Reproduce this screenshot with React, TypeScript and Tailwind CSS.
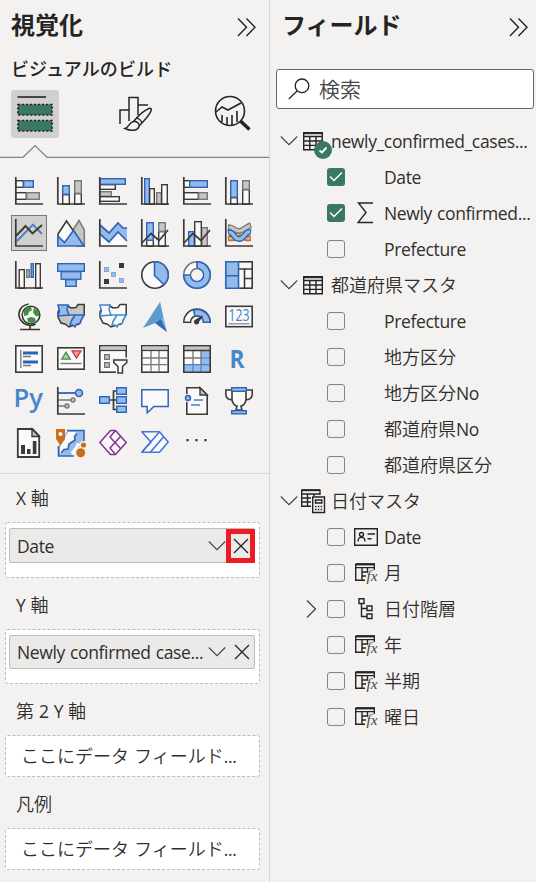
import React from "react";

const D = "#3b3a38";
const BL = "#2f63b8";
const LB = "#94bbe9";
const G = "#797775";
const LG = "#c8c6c4";
const W = "#fafafa";

const kinds: Record<string, [string, string]> = {
  b: [LB, BL],
  w: [W, D],
  g: [LG, G],
  d: [D, D],
};

/* Rectangle given by its outer edges, with the stroke kept inside. */
function B({ p, k }: { p: [number, number, number, number]; k: string }) {
  const [x1, y1, x2, y2] = p;
  return (
    <rect x={x1 + 0.7} y={y1 + 0.7} width={x2 - x1 - 1.4} height={y2 - y1 - 1.4} fill={kinds[k][0]} stroke={kinds[k][1]} strokeWidth={1.4} />
  );
}

const Axis = () => <path d="M.8 0V27H28" fill="none" stroke={D} strokeWidth={1.7} />;

type Bar = [string, number, number, number, number];
function Bars({ items, axis = true }: { items: Bar[]; axis?: boolean }) {
  return (
    <>
      {items.map(([k, a, b, c, d], i) => (
        <B key={i} k={k} p={[a, b, c, d]} />
      ))}
      {axis && <Axis />}
    </>
  );
}

const MapShape = ({ white }: { white?: boolean }) => {
  const s = white ? "#3f86d2" : BL;
  return (
    <>
      <path d="M10 2.500L14 5L19 4.500L21 1.500H27.200V11L22 21L16 22.500L12 24L8 21L4 20L1 14V9L3 5z" fill={white ? W : LG} stroke={D} strokeWidth="1.500" />
      <path d="M1 2H11L10 6.500L12 12L1 13L2.500 8z" fill={white ? W : LB} stroke={s} strokeWidth="1.500" />
      <path d="M14 18.500L18 12H27.200L24 17L23.500 20L19 21.500L18 24L16 22L13 22z" fill={white ? W : LB} stroke={s} strokeWidth="1.500" />
      <path d="M12 12H18" stroke={s} strokeWidth="1.400" />
    </>
  );
};

const icons: React.ReactNode[] = [
  <Bars items={[["w", 0, 3, 9, 11], ["b", 8, 3, 19, 11], ["w", 0, 15, 12, 23], ["g", 11, 15, 25, 23]]} />,
  <Bars items={[["w", 5, 17, 13, 28], ["b", 5, 8, 13, 18], ["w", 17, 16, 25, 28], ["g", 17, 3, 25, 17]]} />,
  <Bars items={[["w", 0, 7, 17, 13], ["b", 0, 1, 27, 8], ["g", 0, 14, 13, 20], ["w", 0, 19, 21, 25]]} />,
  <Bars items={[["b", 3, 1, 9, 28], ["w", 8, 11, 14, 28], ["g", 15, 15, 21, 28], ["w", 20, 7, 27, 28]]} />,
  <Bars items={[["w", 0, 3, 8, 11], ["b", 6, 3, 25, 11], ["w", 0, 15, 16, 23], ["g", 15, 15, 25, 23]]} />,
  <Bars items={[["w", 5, 20, 13, 28], ["b", 5, 3, 13, 21], ["w", 17, 12, 25, 28], ["g", 17, 3, 25, 13]]} />,
  <>
    <g fill="none" strokeWidth="1.900">
      <path d="M2 22L18 5.500L27 15" stroke="#4682c4" />
      <path d="M1 17L10.500 7L17.500 14.500L27 6" stroke={D} />
    </g>
    <Axis />
  </>,
  <>
    <path d="M14 14L22 1.500L27.300 11V27H20z" fill={LG} stroke={G} strokeWidth="1.500" />
    <path d="M1 26V15L9.500 2L18 14 14 24z" fill={W} stroke={D} strokeWidth="1.600" />
    <path d="M.8 27V17L7.500 23.500L16.500 11.500L27 27z" fill={LB} stroke={BL} strokeWidth="1.600" />
  </>,
  <>
    <path d="M1 15L10 23L19 13L28 22V27H1z" fill={W} />
    <path d="M1 6L10 14L19 4L24 9H28V22L19 13L10 23L1 15z" fill={LB} />
    <path d="M1 6L10 14L19 4L24 9H28M1 15L10 23L19 13L28 22" fill="none" stroke={BL} strokeWidth="1.700" />
    <Axis />
  </>,
  <>
    <Bars items={[["w", 5, 20, 13, 28], ["b", 5, 3, 13, 22], ["w", 17, 12, 25, 28], ["g", 17, 3, 25, 13]]} />
    <path d="M1 24L10 14.500L18 21.500L27 11" fill="none" stroke={D} strokeWidth="1.700" />
  </>,
  <>
    <Bars items={[["b", 5, 12, 12, 28], ["g", 18, 8, 25, 28], ["w", 11, 2, 19, 28]]} />
    <path d="M1 24L10 14.500L18 21.500L27 11" fill="none" stroke={D} strokeWidth="1.700" />
  </>,
  <>
    <g fill="none">
      <path d="M3 19.500H8C12 19 12 14 15 14S18 19 21 19.500H26" stroke="#cb6d1b" strokeWidth="5.500" />
      <path d="M4 19.500H8C12 19 12 14 15 14S18 19 21 19.500H25" stroke="#f7c070" strokeWidth="2.200" />
      <path d="M3 8C8 8 9 12 14 12S20 8 26 6" stroke={G} strokeWidth="6" />
      <path d="M4 8C8 8 9 12 14 12S20 8 25 6.400" stroke={LG} strokeWidth="3.200" />
      <path d="M3 13.500C9 12 8 20 14 20S20 12 26 13" stroke={BL} strokeWidth="6" />
      <path d="M4 13.500C9 12 8 20 14 20S20 12 25 13" stroke={LB} strokeWidth="3.200" />
    </g>
    <Axis />
  </>,
  <Bars items={[["w", 3.5, 8, 10, 28], ["g", 11, 8, 15, 17], ["w", 20, 2, 26, 28], ["b", 15.5, 2, 19, 17]]} />,
  <Bars axis={false} items={[["b", 0, 2, 28, 11], ["b", 3.5, 10, 24.5, 19], ["b", 8, 18, 20, 26]]} />,
  <>
    <g fill={LB} stroke="#76a3d8" strokeWidth=".8">
      <rect x="5.400" y="6.400" width="4.200" height="4.200" />
      <rect x="12.400" y="11.400" width="4.200" height="4.200" />
      <rect x="20.400" y="17.400" width="4.200" height="4.200" />
    </g>
    <path d="M20 2h5v5h-5zM5 18h5v5h-5z" fill={D} />
    <Axis />
  </>,
  <>
    <circle cx="14" cy="14" r="13.200" fill={W} stroke={D} strokeWidth="1.600" />
    <path d="M13.500 .8A13.200 13.200 0 0 1 22.900 23.700L13.500 14.500z" fill={LB} stroke={BL} strokeWidth="1.600" />
  </>,
  <>
    <circle cx="14" cy="14" r="13.200" fill={W} stroke={G} strokeWidth="1.600" />
    <path d="M14 .8A13.200 13.200 0 1 1 .8 14H7.500A6.500 6.500 0 1 0 14 7.500z" fill={LB} stroke={BL} strokeWidth="1.600" />
    <circle cx="14" cy="14" r="5.600" fill="#f3f2f1" />
    <path d="M7.500 14A6.500 6.500 0 0 1 14 7.500" fill="none" stroke={G} strokeWidth="1.600" />
  </>,
  <>
    <rect x=".8" y=".8" width="26.400" height="26.400" fill={W} stroke={D} strokeWidth="1.600" />
    <path d="M14 8H28M19.500 8V28M19.500 17.500H28" stroke={D} strokeWidth="1.600" />
    <path d="M.8 .8H13.500V27.200H.8zM.8 14.800H13.500" fill={LB} stroke={BL} strokeWidth="1.600" />
  </>,
  <>
    <circle cx="16" cy="12" r="8.800" fill={W} stroke={D} strokeWidth="1.600" />
    <path d="M9 7l4-3h3l1 3-3 2-1 3-4 1zM19 4.500l4 3 1.500 5-3.500 1-3-4zM12 15.500l4-1.500 4 1 1 3-4 2-4-1z" fill="#3f9142" />
    <path d="M13.500 1C3 3 1 14 8.500 20c4 3 9 3 12 1M15 23v3.500M5 26.500H25" fill="none" stroke={D} strokeWidth="1.700" />
  </>,
  <MapShape />,
  <MapShape white />,
  <>
    <path d="M19 -1L14 20L26 29z" fill="#78b5dd" />
    <path d="M19 -1L2 25L14 20L22 14z" fill="#5c9bca" />
    <path d="M20 16L26 29L14 20z" fill="#3868b8" />
  </>,
  <>
    <path d="M.8 19.200A13.200 13.200 0 0 1 27.200 19.200H20.500A6.500 6.500 0 0 0 7.500 19.200z" fill={W} stroke={D} strokeWidth="1.500" />
    <path d="M10.500 7A13.200 13.200 0 0 1 27.200 19.200H20.500A6.500 6.500 0 0 0 12 13z" fill={LB} stroke={BL} strokeWidth="1.500" />
    <path d="M19.500 13L15.500 18.500A2 2 0 1 1 13 17z" fill={D} stroke={D} strokeWidth="1.200" />
  </>,
  <>
    <rect x=".8" y="3.300" width="26.400" height="20.400" fill={W} stroke={D} strokeWidth="1.600" />
    <text x="3.500" y="18.300" textLength="21" lengthAdjust="spacingAndGlyphs" fontSize="15.500" fontFamily="Open Sans, sans-serif" fill="#3f82cc">123</text>
    <path d="M3.500 20.800H24.500" stroke={G} strokeWidth="1.100" />
  </>,
  <>
    <rect x=".8" y=".8" width="26.400" height="26.400" fill={W} stroke={D} strokeWidth="1.600" />
    <path d="M5.800 5V23M8 11.500H16M8 20.500H16" stroke={G} strokeWidth="1.300" />
    <path d="M8 8H23M8 17H23" stroke={BL} strokeWidth="2.800" />
  </>,
  <>
    <rect x=".8" y="2.800" width="26.400" height="21.400" fill={W} stroke={D} strokeWidth="1.600" />
    <path d="M4.700 14.200L9 7.300L13.300 14.200z" fill="#a5d5a7" stroke="#3f9142" strokeWidth="1.300" />
    <path d="M15 5.800L19.500 13L24 5.800z" fill="#f19a9c" stroke="#d13438" strokeWidth="1.300" />
    <path d="M3.500 18.500H24.500" stroke={G} strokeWidth="1.400" />
  </>,
  <>
    <rect x=".8" y=".8" width="26.400" height="26.400" fill={W} stroke={D} strokeWidth="1.600" />
    <path d="M1.500 1.500h25v4h-25z" fill={LG} />
    <path d="M1 5.500H27" stroke={D} strokeWidth="1.200" />
    <B k="g" p={[5, 9, 11, 15]} />
    <B k="g" p={[5, 17, 11, 23]} />
    <path d="M12.500 12.500H30V30H17V22L12.500 18z" fill="#f3f2f1" />
    <path d="M14.800 15H27.800V17.500L23.500 21.500V28H19V21.500L14.800 17.500z" fill={W} stroke={D} strokeWidth="1.500" />
  </>,
  <>
    <rect x=".8" y=".8" width="26.400" height="26.400" fill={W} stroke={D} strokeWidth="1.600" />
    <path d="M1.500 1.500h25v4h-25z" fill={LG} />
    <path d="M10 6V27M18 6V27M1 13H27M1 19.700H27" stroke={G} strokeWidth="1.300" />
    <path d="M1 5.500H27" stroke={D} strokeWidth="1.200" />
  </>,
  <>
    <rect x=".8" y=".8" width="26.400" height="26.400" fill={W} />
    <path d="M18 6h9v21H1v-7h17z" fill={LB} />
    <path d="M1.500 1.500h25v4h-25z" fill={LG} />
    <path d="M10 6V19M18 6V19M1 13H18" stroke={G} strokeWidth="1.300" />
    <path d="M18 13H27M1 19.700H27M10 20V27M18 20V27" stroke="#4d82c8" strokeWidth="1.200" />
    <path d="M1 5.500H27M.8.8H27.200V27.200H.8z" fill="none" stroke={D} strokeWidth="1.600" />
  </>,
  <text x="4.500" y="22.800" textLength="15" lengthAdjust="spacingAndGlyphs" fontSize="25" fontWeight="700" fontFamily="Open Sans, sans-serif" fill="#4687c8">R</text>,
  <text x="-1.500" y="20.300" textLength="29.500" lengthAdjust="spacingAndGlyphs" fontSize="26" fontWeight="600" fontFamily="Open Sans, sans-serif" fill="#4687c8">Py</text>,
  <>
    <path d="M1 6H19" stroke={BL} strokeWidth="1.800" />
    <path d="M1 13H14M1 19H8" stroke={G} strokeWidth="1.600" />
    <circle cx="22" cy="6" r="3.500" fill={LB} stroke={BL} strokeWidth="1.500" />
    <circle cx="16" cy="13" r="2" fill={LG} stroke={G} strokeWidth="1.400" />
    <circle cx="10" cy="19" r="2" fill={LG} stroke={G} strokeWidth="1.400" />
    <Axis />
  </>,
  <>
    <path d="M11 13H17M18 4H14.500V22.500H18" fill="none" stroke={D} strokeWidth="1.700" />
    <Bars axis={false} items={[["b", 0, 9, 11, 17], ["b", 17, 0, 28, 8], ["b", 17, 9, 28, 17], ["b", 17, 18.5, 28, 26]]} />
  </>,
  <path d="M.8 2.800H27.200V19.500H13L6.200 25.800V19.500H.8z" fill={W} stroke={BL} strokeWidth="1.500" />,
  <>
    <path d="M3.800 .8H17L24.200 8V27.200H3.800z" fill={W} stroke={D} strokeWidth="1.600" />
    <path d="M17 .8V8H24.200z" fill={LG} stroke={D} strokeWidth="1.400" />
    <path d="M2 7h5l2 4-2 4H2z" fill="#f3f2f1" />
    <circle cx="5" cy="11" r="2.500" fill={LB} stroke={BL} strokeWidth="1.400" />
    <path d="M11 13H20M8 18H17" stroke="#3f82cc" strokeWidth="1.500" />
  </>,
  <>
    <path d="M7 3H.8V7C.8 11 4 13 8 13M21 3H27.200V7C27.200 11 24 13 20 13" fill={W} stroke={D} strokeWidth="1.600" />
    <path d="M7 4H21V12C21 16 18 19 16 19L17 23H11L12 19C10 19 7 16 7 12z" fill={W} stroke={D} strokeWidth="1.600" />
    <Bars axis={false} items={[["b", 6, 0, 22, 5], ["b", 6, 23, 22, 27.5]]} />
  </>,
  <>
    <path d="M2.800 0H17.500L24.200 7V28H2.800z" fill={W} stroke={D} strokeWidth="1.800" />
    <path d="M17 0V7.500H24.200z" fill={LG} stroke={D} strokeWidth="1.400" />
    <path d="M6 16h4v9H6zM12 20h3.500v5H12zM17.800 12h3.600v13h-3.600z" fill={D} />
  </>,
  <>
    <path d="M10 2H26.500V11C23 14 25 17 20 21L14 26.500H1.500V17z" fill={LB} />
    <path d="M11 3H19L17 7L18 11L12 15L11 20L7 21L3 25V18z" fill={W} />
    <path d="M26 15L21 18L17 25L15 26L14 23L18 18L20 14z" fill={W} />
    <path d="M10 1.500H27V14M17 27H1.500V17M20 5L17.500 7.500L18 11L12 15L11 20L7 20.500L4 24" fill="none" stroke={BL} strokeWidth="1.600" />
    <path d="M-1 0H8V10L3.500 16.500L-1 10z" fill="#cb6d1b" />
    <circle cx="3.500" cy="5" r="2" fill="#fff" />
    <circle cx="23.700" cy="23.700" r="6" fill="#f3f2f1" />
    <circle cx="26.500" cy="16" r="4" fill="#f3f2f1" />
    <circle cx="23.700" cy="23.700" r="4.500" fill="#cb6d1b" />
    <circle cx="26.500" cy="16" r="2.600" fill="#cb6d1b" />
  </>,
  <g fill={W} stroke="#852f96" strokeWidth="1.500" strokeLinejoin="round">
    <path d="M11.500 1.500H16.500L27.200 13.500L16.500 25.500H11.500L.8 13.500z" />
    <path d="M16.500 1.500L11 8L21.500 19.500M16.500 25.500L11 19L21.500 7.500" fill="none" />
  </g>,
  <g fill={W} stroke="#4574d8" strokeWidth="1.600" strokeLinejoin="round">
    <path d="M.8 2.800H18.500L27.200 13L18.500 23.200H.8L10 13z" />
    <path d="M18.500 2.800L1.500 22.500M22.500 8L9.500 23" fill="none" />
  </g>,
  <path d="M3.500 10h2v2.200h-2zM12.500 10h2v2.200h-2zM21.500 10h2v2.200h-2z" fill="#252423" />,
];

const LATIN = "font-['Open_Sans',sans-serif]";
const CJK = "font-['Noto_Sans_CJK_JP',sans-serif]";

/* Splits a label into Latin and Japanese runs, each in its own face. */
function Label({ children }: { children: string }) {
  const runs = children.match(/[\x20-\x7e]+|[^\x20-\x7e]+/g) ?? [];
  const mixed = /[^\x20-\x7e]/.test(children);
  return (
    <span className={mixed ? "-mt-0.5 flex items-baseline whitespace-pre leading-6 text-[#302f2d]" : "flex items-baseline whitespace-pre leading-6 text-[#302f2d]"}>
      {runs.map((r, i) => (
        <span key={i} className={/[\x20-\x7e]/.test(r) ? `${LATIN} text-[17.5px] tracking-[-0.35px] [word-spacing:0.8px]` : `${CJK} text-[18px] font-[350]`}>
          {r}
        </span>
      ))}
    </span>
  );
}

const Expand = () => (
  <svg width="20" height="20" viewBox="0 0 20 20" fill="none" stroke="#252423" strokeWidth="1.400">
    <path d="M1 1.500L9.500 10.200L1 19M9.500 1.500L18 10.200L9.500 19" />
  </svg>
);
const Chevron = () => (
  <svg className="shrink-0" width="18" height="12" viewBox="0 0 18 12" fill="none" stroke="#484644" strokeWidth="1.200">
    <path d="M.8 1.500L9 9.700L17.200 1.500" />
  </svg>
);
const Cross = () => (
  <svg className="shrink-0" width="16" height="16" viewBox="0 0 16 16" fill="none" stroke="#252423" strokeWidth="1.300">
    <path d="M1 1L15 15M15 1L1 15" />
  </svg>
);

function Well({ label, value, marked }: { label: string; value: string; marked?: boolean }) {
  return (
    <div className={marked ? "h-[107px]" : "h-[106px]"}>
      <div className="flex h-12 items-center pl-4"><Label>{label}</Label></div>
      <div className="relative ml-[5px] h-[56px] w-[255px] pl-1 pr-[5px] pt-[6px]">
        <DashedBox h={marked ? 56 : 55} />
        <div className={marked ? "relative flex h-[35px] items-center rounded-[2px] border border-[#bebbb8] bg-[#ebeae9] pl-[7px]" : "relative flex h-[34px] items-center rounded-[2px] border border-[#bebbb8] bg-[#ebeae9] pl-[7px]"}>
          <div className="w-[191px] shrink-0"><Label>{value}</Label></div>
          <Chevron />
          <div className={marked ? "absolute -right-px top-0 flex h-[34px] w-[29px] items-center justify-center border-[5px] border-[#ed1c24] pl-px" : "absolute right-0 top-0 flex h-[32px] w-[27px] items-center justify-center pl-[2px]"}>
            <Cross />
          </div>
        </div>
      </div>
    </div>
  );
}

function DashedBox({ h }: { h: number }) {
  return (
    <svg className="absolute left-0 top-0" width="255" height={h}>
      <rect x=".5" y=".5" width="254" height={h - 1} rx="2" fill="#fff" stroke="#bebbb8" strokeDasharray="3 2" />
    </svg>
  );
}

function EmptyWell({ label }: { label: string }) {
  return (
    <div className="h-[93px]">
      <div className="flex h-12 items-center pl-4"><Label>{label}</Label></div>
      <div className="relative ml-[5px] flex h-[42px] w-[255px] items-center pl-4">
        <DashedBox h={42} />
        <span className="relative"><Label>ここにデータ フィールド...</Label></span>
      </div>
    </div>
  );
}

const TableIcon = () => (
  <svg width="20" height="19" viewBox="0 0 20 19" fill="none" stroke="#252423" strokeWidth="1.400">
    <path d="M.7 .7H19.300V17.800H.7zM.7 4.500H19.300M.7 9H19.300M.7 13.400H19.300M6.800 4.500V18M13 4.500V18" />
    <path d="M.7 1.200H19.300" strokeWidth="2" />
  </svg>
);
const CalcTableIcon = () => (
  <svg width="25" height="25" viewBox="0 0 25 25" fill="none" stroke="#252423" strokeWidth="1.400">
    <path d="M10 17.300H.7V1.300H19V6M.7 5H19M.7 9H10M.7 13H10M6.500 5V17M13 5V7" />
    <path d="M.7 1.200H19" strokeWidth="2" />
    <path d="M11.700 8H23.500V23.500H11.700z" fill="#f3f2f1" />
    <path d="M14.500 11H20.800V14H14.500z" />
    <path d="M14 17.500H21.500M14 20.500H21.500" strokeDasharray="1.500 1.300" />
  </svg>
);
const CardIcon = () => (
  <svg width="24" height="18" viewBox="0 0 24 18" fill="none" stroke="#252423" strokeWidth="1.400">
    <path d="M.7 .7H23.300V17.300H.7zM13.500 6H21M13.500 10.800H17.500" />
    <circle cx="7.500" cy="6.500" r="2" />
    <path d="M4 13.500C4 8 11 8 11 13.500" />
  </svg>
);
const FxIcon = () => (
  <svg width="24" height="22" viewBox="0 0 24 22" fill="none" stroke="#252423" strokeWidth="1.400">
    <path d="M1.700 2H20.300V8M1.700 2V18.300H11M1.700 5.600H20.300M8 5.600V18M13.500 5.600V10H8M8 14H12" />
    <path d="M1.700 2.400H20.300" strokeWidth="2" />
    <text x="12.500" y="18.800" textLength="11" lengthAdjust="spacingAndGlyphs" fontFamily="Liberation Serif, serif" fontStyle="italic" fontSize="15" fill="#484644" stroke="none">fx</text>
  </svg>
);
const TreeIcon = () => (
  <svg width="16" height="22" viewBox="0 0 16 22" fill="none" stroke="#252423" strokeWidth="1.400">
    <path d="M1 .8H6V5.500H1zM3.500 5.500V18.500H9M3.500 10.500H9M9 8H14V12.500H9zM9 16H14V20.500H9z" />
  </svg>
);
const SigmaIcon = () => (
  <svg width="17" height="22" viewBox="0 0 17 22" fill="none" stroke="#252423" strokeWidth="1.400">
    <path d="M16 1H1.500L9 10.500L1 20.500H16" />
  </svg>
);

function Check({ on }: { on?: boolean }) {
  return (
    <span className={on ? "flex size-[18px] shrink-0 items-center justify-center rounded-[3px] bg-[#397864]" : "size-[18px] shrink-0 rounded-[3px] border border-[#858381]"}>
      {on && (
        <svg width="14" height="12" viewBox="0 0 14 12" fill="none" stroke="#fff" strokeWidth="1.400"><path d="M1 5.500L5 9.500L13 1.500" /></svg>
      )}
    </span>
  );
}

function Field({ name, on, icon, nested }: { name: string; on?: boolean; icon?: React.ReactNode; nested?: boolean }) {
  return (
    <div className="flex h-9 items-center">
      <span className="flex w-[57px] justify-end pr-2.5">
        {nested && <svg width="11" height="20" viewBox="0 0 11 20" fill="none" stroke="#484644" strokeWidth="1.300"><path d="M1 1.500L9.500 10L1 18.500" /></svg>}
      </span>
      <Check on={on} />
      <span className="flex w-[39px] justify-center pr-[1px] pl-[3px]">{icon}</span>
      <Label>{name}</Label>
    </div>
  );
}

function TableRow({ name, checked, calc }: { name: string; checked?: boolean; calc?: boolean }) {
  return (
    <div className="flex h-9 items-center">
      <span className="ml-[10px]"><Chevron /></span>
      <span className={calc ? "relative ml-[3px] w-[30px]" : "relative ml-[5px] w-[28px]"}>
        {calc ? <CalcTableIcon /> : <TableIcon />}
        {checked && (
          <svg className="absolute left-[11px] top-[9px]" width="18" height="18" viewBox="0 0 18 18">
            <circle cx="9" cy="9" r="9" fill="#397864" />
            <path d="M5.500 9.500L8 11.500L12.500 6.500" fill="none" stroke="#fff" strokeWidth="1.900" />
          </svg>
        )}
      </span>
      <Label>{name}</Label>
    </div>
  );
}

export default function App() {
  return (
    <div className="flex h-[882px] w-[536px] overflow-hidden bg-[#f3f2f1] text-[#252423]">
      <section className="flex w-[270px] shrink-0 flex-col border-r border-[#d9d7d5]">
        <header className="flex h-[54px] items-center justify-between pl-[11px] pr-3">
          <h1 className={`${CJK} -mt-1.5 text-[24px] font-bold leading-none`}>視覚化</h1>
          <Expand />
        </header>
        <h2 className={`${CJK} h-9 pl-[11px] text-[18px] font-medium leading-[29px] tracking-[0.12px]`}>ビジュアルのビルド</h2>
        <div className="flex h-12 items-center pl-[11px]">
          <div className="flex size-12 items-center justify-center rounded-[3px] bg-[#d2d0ce]">
            <svg width="38" height="38" viewBox="0 0 38 38">
              <path d="M1.500 2H30" stroke="#252423" strokeWidth="1.600" />
              <path d="M2 9.500H36V20H2zM2 25.500H36V36H2z" fill="#397864" stroke="#252423" strokeWidth="1.700" strokeDasharray="2.300 1.700" />
            </svg>
          </div>
          <svg className="ml-[59px]" width="35" height="36" viewBox="0 0 35 36" fill="none" stroke="#252423" strokeWidth="1.500">
            <path d="M2 28V14H11M11 25V1.500H20V19M20 9H30" />
            <path d="M16 25C20 20 26 14.500 31 12.500C33 12 34 13 33 15C31 20 26 25 21 30z" fill="#f3f2f1" />
            <path d="M18.500 22C21 22.500 23.500 25 24 27" />
            <path d="M7 32.500C11 31.500 11 26 15.500 25.500C19 25 22 27.500 21 30.500C19.500 35.500 12 35 7 32.500z" fill="#f3f2f1" />
          </svg>
          <svg className="ml-[60px]" width="38" height="38" viewBox="0 0 38 38" fill="none" stroke="#252423" strokeWidth="1.600">
            <circle cx="17" cy="16" r="14.500" />
            <path d="M3 17L9 12L15 15L28 8M9 27V20M14 30V22M19 30V20M24 27V16" />
            <path d="M27.500 26L36.500 34.500" strokeWidth="3.500" />
          </svg>
        </div>
        <svg className="mt-1.5 shrink-0" width="269" height="15" viewBox="0 0 269 15" fill="none" stroke="#858381" strokeWidth="1.200">
          <path d="M0 13.300H23L35 1.500L47 13.300H269" />
        </svg>
        <div className="mt-[14px] grid shrink-0 grid-cols-6 gap-1.5 self-start pl-[11px]">
          {icons.map((icon, i) => (
            <div key={i} className={i === 6 ? "flex size-9 items-center justify-center border border-[#797775] bg-[#d2d0ce]" : "flex size-9 items-center justify-center"}>
              <svg className="shrink-0 overflow-visible" width="28" height="28" viewBox="0 0 28 28">{icon}</svg>
            </div>
          ))}
        </div>
        <div className="mt-[12px] border-t border-[#d9d7d5]">
          <Well label="X 軸" value="Date" marked />
          <Well label="Y 軸" value="Newly confirmed case..." />
          <EmptyWell label="第 2 Y 軸" />
          <EmptyWell label="凡例" />
        </div>
      </section>
      <section className="w-[266px]">
        <header className="flex h-[54px] items-center justify-between pl-[12px] pr-[7px]">
          <h1 className={`${CJK} -mt-1.5 text-[24px] font-bold leading-none`}>フィールド</h1>
          <Expand />
        </header>
        <div className="ml-[6px] mt-[15px] flex h-10 w-[258px] items-center rounded-[3px] border border-[#686664] bg-white pl-[11px]">
          <svg width="22" height="22" viewBox="0 0 22 22" fill="none" stroke="#252423" strokeWidth="1.300">
            <circle cx="14" cy="7.800" r="6.800" /><path d="M9.300 12.800L.8 21" />
          </svg>
          <span className={`${CJK} ml-[9px] text-[21px] font-[350] text-[#484644]`}>検索</span>
        </div>
        <div className="pt-[14px]">
          <TableRow name="newly_confirmed_cases..." checked />
          <Field name="Date" on />
          <Field name="Newly confirmed..." on icon={<SigmaIcon />} />
          <Field name="Prefecture" />
          <TableRow name="都道府県マスタ" />
          <Field name="Prefecture" />
          <Field name="地方区分" />
          <Field name="地方区分No" />
          <Field name="都道府県No" />
          <Field name="都道府県区分" />
          <TableRow name="日付マスタ" calc />
          <Field name="Date" icon={<CardIcon />} />
          <Field name="月" icon={<FxIcon />} />
          <Field name="日付階層" icon={<TreeIcon />} nested />
          <Field name="年" icon={<FxIcon />} />
          <Field name="半期" icon={<FxIcon />} />
          <Field name="曜日" icon={<FxIcon />} />
        </div>
      </section>
    </div>
  );
}
